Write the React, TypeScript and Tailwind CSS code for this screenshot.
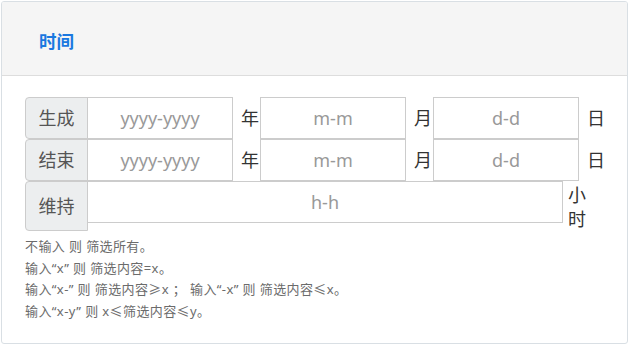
const font = { fontFamily: '"Noto Sans", "Noto Sans CJK SC", sans-serif' };

interface RangeRowProps {
  label: string;
}

function Addon({ label, tall }: { label: string; tall?: boolean }) {
  return (
    <span
      className={
        'flex w-[63px] shrink-0 items-center justify-center rounded-l-[4px] border border-[#ccc] bg-[#eceeef] text-[18px] text-[#555] ' +
        (tall ? 'h-[50px]' : 'h-[42px]')
      }
    >
      {label}
    </span>
  );
}

function Field({ placeholder, className }: { placeholder: string; className: string }) {
  return (
    <input
      placeholder={placeholder}
      className={
        'h-[42px] border border-[#ccc] bg-white text-center text-[18px] text-[#555] placeholder:text-[#999] outline-none ' +
        className
      }
      style={font}
    />
  );
}

function Unit({ text }: { text: string }) {
  return (
    <span className="flex h-[42px] w-[27px] shrink-0 items-center pl-[8px] text-[18px] text-[#333]">
      {text}
    </span>
  );
}

function RangeRow({ label }: RangeRowProps) {
  return (
    <div className="flex">
      <Addon label={label} />
      <Field placeholder="yyyy-yyyy" className="w-[146px] -ml-px" />
      <Unit text="年" />
      <Field placeholder="m-m" className="w-[146px]" />
      <Unit text="月" />
      <Field placeholder="d-d" className="w-[146px]" />
      <Unit text="日" />
    </div>
  );
}

export default function App() {
  return (
    <div className="h-[346px] w-[630px] bg-white pl-px pt-px" style={font}>
      <div className="h-[343px] w-[627px] overflow-hidden rounded-[3px] border border-[#d9dfe4]">
        {/* Heading */}
        <div className="flex h-[74px] items-center border-b border-[#ddd] bg-[#f5f5f5] pl-[37px] pt-[6px]">
          <span className="text-[17.5px] font-bold text-[#1a78e0]">时间</span>
        </div>

        {/* Body */}
        <div className="pl-[23px] pt-[21px]">
          <RangeRow label="生成" />
          <RangeRow label="结束" />
          <div className="flex items-start">
            <Addon label="维持" tall />
            <Field placeholder="h-h" className="w-[476px] -ml-px" />
            <span className="w-[24px] pl-[5px] pt-[2px] text-[18px] leading-[24px] text-[#333]">
              小时
            </span>
          </div>

          <div className="mt-[5px] text-[13px] leading-[21.5px] tracking-[0.4px] text-[#6b6b6b]">
            <div>不输入 则 筛选所有。</div>
            <div>输入“x” 则 筛选内容=x。</div>
            <div>输入“x-” 则 筛选内容≥x ； 输入“-x” 则 筛选内容≤x。</div>
            <div>输入“x-y” 则 x≤筛选内容≤y。</div>
          </div>
        </div>
      </div>
    </div>
  );
}
